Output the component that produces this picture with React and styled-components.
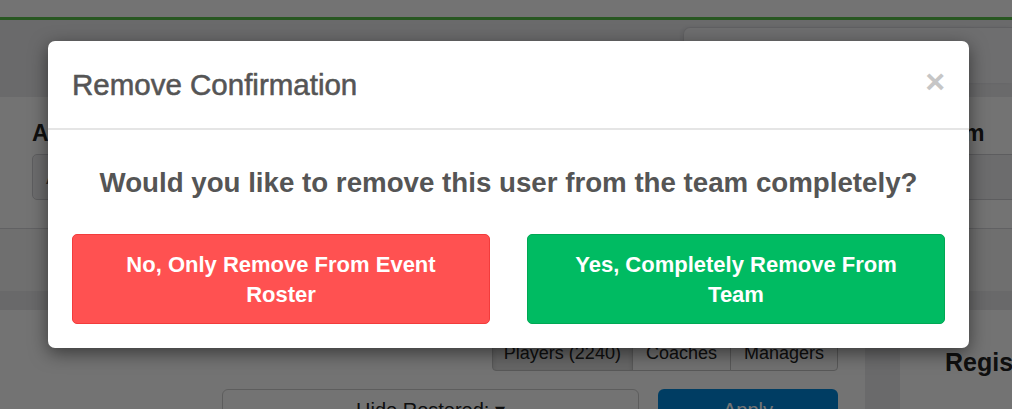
import React from "react";
import styled, { createGlobalStyle } from "styled-components";

const GlobalStyle = createGlobalStyle`
  html, body { margin: 0; padding: 0; }
  body {
    font-family: "Liberation Sans", Arial, Helvetica, sans-serif;
    background: #fff;
    width: 1012px;
    height: 409px;
    overflow: hidden;
  }
  * { box-sizing: border-box; }
`;

const Page = styled.div`
  position: relative;
  width: 1012px;
  height: 409px;
  overflow: hidden;
  background: #fff;
  display: flex;
  flex-direction: column;
  color: #222;
`;

const TopStrip = styled.div`
  flex: none;
  height: 17px;
  background: #ffffff;
`;

const AccentLine = styled.div`
  flex: none;
  height: 3px;
  background: #5ac24a;
`;

const HeaderBand = styled.div`
  flex: none;
  height: 77px;
  background: #ebebee;
  display: flex;
  justify-content: flex-end;
  align-items: flex-start;
  padding-top: 7px;
`;

const SidePanel = styled.div`
  width: 329px;
  height: 56px;
  background: #f3f3f5;
  border-top: 1px solid #d6d6da;
  border-left: 1px solid #d6d6da;
  border-top-left-radius: 7px;
  box-shadow: -2px 0 4px rgba(0, 0, 0, 0.06);
`;

const FilterRow = styled.div`
  flex: none;
  height: 131px;
  display: flex;
  padding-left: 32px;
`;

const FieldGroup = styled.div`
  flex: none;
  width: ${(p) => p.$width}px;
  margin-left: ${(p) => (p.$end ? "auto" : "0")};
  padding-top: 23px;
  display: flex;
  flex-direction: column;
  gap: 8px;
`;

const FieldLabel = styled.div`
  font-size: 23px;
  line-height: 26px;
  font-weight: 700;
  color: #222;
  white-space: nowrap;
`;

const FieldInput = styled.div`
  width: ${(p) => p.$width}px;
  height: 46px;
  border: 1px solid #cfcfd3;
  border-radius: 5px;
  background: #f0f0f2;
  font-size: 20px;
  color: #555;
  display: flex;
  align-items: center;
  padding-left: 13px;
`;

const SectionBand = styled.div`
  flex: none;
  height: 63px;
  background: #f5f5f6;
  border-top: 1px solid #d8d8dc;
`;

const SectionStrip = styled.div`
  flex: none;
  height: 19px;
  background: #e9e9ec;
`;

const Content = styled.div`
  flex: 1;
  display: flex;
`;

const MainColumn = styled.div`
  flex: none;
  width: 865px;
  padding: 25px 27px 0 0;
  display: flex;
  flex-direction: column;
  align-items: flex-end;
  gap: 18px;
`;

const Gutter = styled.div`
  flex: none;
  width: 35px;
  background: #ececee;
`;

const SideColumn = styled.div`
  flex: 1;
  padding: 38px 0 0 45px;
`;

const SideHeading = styled.div`
  font-size: 25px;
  line-height: 28px;
  font-weight: 700;
  color: #222;
  white-space: nowrap;
`;

const TabGroup = styled.div`
  display: flex;
  height: 36px;
`;

const Tab = styled.div`
  padding: 0 ${(p) => p.$pad}px;
  font-size: 18px;
  display: flex;
  align-items: center;
  color: #222;
  border: 1px solid #c4c4c4;
  margin-left: -1px;
  background: ${(p) => (p.$active ? "#e3e3e3" : "#fafafa")};
  box-shadow: ${(p) => (p.$active ? "inset 0 3px 5px rgba(0,0,0,0.12)" : "none")};
  &:first-child { border-radius: 4px 0 0 4px; margin-left: 0; }
  &:last-child { border-radius: 0 4px 4px 0; }
`;

const ActionRow = styled.div`
  display: flex;
  gap: 19px;
`;

const DropButton = styled.div`
  width: 417px;
  height: 42px;
  border: 1px solid #cfcfcf;
  border-radius: 6px;
  background: #fff;
  font-size: 20px;
  color: #222;
  display: flex;
  justify-content: center;
  align-items: center;
`;

const ApplyButton = styled.div`
  width: 180px;
  height: 42px;
  border-radius: 6px;
  background: #0088dc;
  color: #fff;
  font-size: 20px;
  display: flex;
  justify-content: center;
  align-items: center;
`;

const Backdrop = styled.div`
  position: absolute;
  inset: 0;
  background: rgba(0, 0, 0, 0.55);
  z-index: 10;
`;

const Modal = styled.div`
  position: absolute;
  left: 48px;
  top: 41px;
  width: 921px;
  background: #fff;
  border-radius: 7px;
  box-shadow: 0 5px 18px rgba(0, 0, 0, 0.5);
  z-index: 20;
  display: flex;
  flex-direction: column;
`;

const ModalHeader = styled.div`
  height: 89px;
  display: flex;
  align-items: center;
  justify-content: space-between;
  padding: 0 24px;
  border-bottom: 2px solid #e5e5e5;
`;

const ModalTitle = styled.h4`
  margin: 0;
  font-size: 29.5px;
  font-weight: 400;
  color: #555;
  -webkit-text-stroke: 0.55px #555;
`;

const CloseButton = styled.button`
  border: 0;
  background: transparent;
  padding: 0;
  margin-right: 0;
  margin-top: -8px;
  font-family: "Liberation Sans", Arial, sans-serif;
  font-size: 34px;
  line-height: 1;
  font-weight: 700;
  color: #c6c6c6;
  cursor: pointer;
`;

const ModalBody = styled.div`
  padding: 33px 24px 24px;
  display: flex;
  flex-direction: column;
  gap: 31px;
`;

const Question = styled.h3`
  margin: 0;
  text-align: center;
  font-size: 27.7px;
  line-height: 40px;
  font-weight: 700;
  color: #555;
`;

const ChoiceRow = styled.div`
  display: flex;
  justify-content: space-between;
`;

const ChoiceButton = styled.button`
  width: 418px;
  height: 90px;
  padding: 15px 40px;
  border-radius: 5px;
  border: 1px solid ${(p) => (p.$variant === "danger" ? "#f23c3c" : "#00a854")};
  background: ${(p) => (p.$variant === "danger" ? "#ff5151" : "#00bb62")};
  color: #fff;
  font-family: "Liberation Sans", Arial, sans-serif;
  font-size: 22px;
  line-height: 30px;
  font-weight: 700;
  text-align: center;
  cursor: pointer;
`;

export default function App() {
  return (
    <>
      <GlobalStyle />
      <Page>
        <TopStrip />
        <AccentLine />
        <HeaderBand>
          <SidePanel />
        </HeaderBand>
        <FilterRow>
          <FieldGroup $width={360}>
            <FieldLabel>Age Group</FieldLabel>
            <FieldInput $width={330}>All</FieldInput>
          </FieldGroup>
          <FieldGroup $width={86} $end>
            <FieldLabel>Team</FieldLabel>
            <FieldInput $width={140}>All</FieldInput>
          </FieldGroup>
        </FilterRow>
        <SectionBand />
        <SectionStrip />
        <Content>
          <MainColumn>
            <TabGroup>
              <Tab $active $pad={11}>Players (2240)</Tab>
              <Tab $pad={13}>Coaches</Tab>
              <Tab $pad={13}>Managers</Tab>
            </TabGroup>
            <ActionRow>
              <DropButton>Hide Rostered: ▾</DropButton>
              <ApplyButton>Apply</ApplyButton>
            </ActionRow>
          </MainColumn>
          <Gutter />
          <SideColumn>
            <SideHeading>Registration</SideHeading>
          </SideColumn>
        </Content>

        <Backdrop />
        <Modal role="dialog">
          <ModalHeader>
            <ModalTitle>Remove Confirmation</ModalTitle>
            <CloseButton aria-label="Close">×</CloseButton>
          </ModalHeader>
          <ModalBody>
            <Question>Would you like to remove this user from the team completely?</Question>
            <ChoiceRow>
              <ChoiceButton $variant="danger">No, Only Remove From Event Roster</ChoiceButton>
              <ChoiceButton $variant="success">Yes, Completely Remove From Team</ChoiceButton>
            </ChoiceRow>
          </ModalBody>
        </Modal>
      </Page>
    </>
  );
}
